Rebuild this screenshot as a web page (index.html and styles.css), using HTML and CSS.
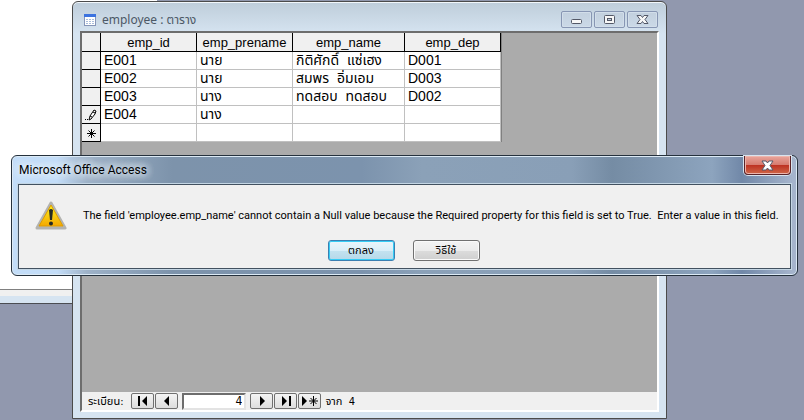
FILE: index.html
```html
<!DOCTYPE html>
<html lang="th">
  <head>
    <meta charset="UTF-8" />
    <meta name="viewport" content="width=device-width, initial-scale=1.0" />
    <title>Microsoft Office Access</title>
    <link rel="stylesheet" href="styles.css">
  </head>
  <body>
    <div class="desktop">
      <div class="back-window"></div>

      <section class="window">
        <header class="window-title">
          <svg class="table-icon" width="12" height="12" viewBox="0 0 12 12" shape-rendering="crispEdges">
            <rect width="12" height="12" fill="#8595b8" />
            <rect width="12" height="3" fill="#3c73df" />
            <rect x="1" y="3" width="10" height="8" fill="#fff" />
            <path d="M2 5h2M5 5h2M8 5h2M2 7h2M5 7h2M8 7h2M2 9h2M5 9h2M8 9h2" stroke="#a9bddc" />
          </svg>
          <h1>employee : ตาราง</h1>
          <div class="window-buttons">
            <button type="button" aria-label="Minimize">
              <svg width="13" height="11" viewBox="0 0 13 11">
                <rect x="1.5" y="5.5" width="10" height="4" rx="1" fill="#f7f7f7" stroke="#535867" />
              </svg>
            </button>
            <button type="button" aria-label="Maximize">
              <svg width="13" height="11" viewBox="0 0 13 11">
                <rect x="1.5" y="1.5" width="10" height="8" rx="1" fill="#f7f7f7" stroke="#535867" />
                <rect x="4.500" y="4.500" width="4" height="2" fill="#c3d0df" stroke="#535867" />
              </svg>
            </button>
            <button type="button" aria-label="Close">
              <svg width="13" height="11" viewBox="0 0 13 11">
                <path d="M1 1.500h4l1.500 2 1.500-2h4L9 5.500l3 4H8l-1.500-2-1.500 2H1l3-4z" fill="#f7f7f7" stroke="#535867" />
              </svg>
            </button>
          </div>
        </header>

        <div class="client">
          <div class="sheet">
            <table>
              <thead>
                <tr>
                  <th class="selector"></th>
                  <th class="id">emp_id</th>
                  <th class="prename">emp_prename</th>
                  <th class="name">emp_name</th>
                  <th class="dep">emp_dep</th>
                </tr>
              </thead>
              <tbody>
                <tr>
                  <td class="selector"></td>
                  <td>E001</td>
                  <td>นาย</td>
                  <td>กิติศักดิ์&nbsp; แซ่เฮง</td>
                  <td>D001</td>
                </tr>
                <tr>
                  <td class="selector"></td>
                  <td>E002</td>
                  <td>นาย</td>
                  <td>สมพร&nbsp; อิ่มเอม</td>
                  <td>D003</td>
                </tr>
                <tr>
                  <td class="selector"></td>
                  <td>E003</td>
                  <td>นาง</td>
                  <td>ทดสอบ&nbsp; ทดสอบ</td>
                  <td>D002</td>
                </tr>
                <tr>
                  <td class="selector">
                    <svg width="12" height="12" viewBox="0 0 12 12">
                      <path d="M4 11l1-4 4-6 2 1-1 3-4 5zM5 7l2 1M8 3l2 1" fill="#fff" stroke="#000" />
                      <path d="M0 10h1v1H0zM2 10h1v1H2z" />
                    </svg>
                  </td>
                  <td>E004</td>
                  <td>นาง</td>
                  <td></td>
                  <td></td>
                </tr>
                <tr>
                  <td class="selector">
                    <svg width="12" height="12" viewBox="0 0 12 12">
                      <path d="M6.500 2v9M2 6.500h9M3.500 3.500l6 6M9.500 3.500l-6 6" fill="none" stroke="#000" />
                    </svg>
                  </td>
                  <td></td>
                  <td></td>
                  <td></td>
                  <td></td>
                </tr>
              </tbody>
            </table>
          </div>

          <footer class="record-nav">
            <label for="record">ระเบียน:</label>
            <div class="nav-group">
              <button type="button" aria-label="First record">
                <svg width="12" height="10" viewBox="0 0 12 10"><path d="M1 0h2v10H1zM10 0v10L5 5z" /></svg>
              </button>
              <button type="button" aria-label="Previous record">
                <svg width="12" height="10" viewBox="0 0 12 10"><path d="M8 0v10L3 5z" /></svg>
              </button>
            </div>
            <input id="record" type="text" value="4">
            <div class="nav-group">
              <button type="button" aria-label="Next record">
                <svg width="12" height="10" viewBox="0 0 12 10"><path d="M4 0v10l5-5z" /></svg>
              </button>
              <button type="button" aria-label="Last record">
                <svg width="12" height="10" viewBox="0 0 12 10"><path d="M2 0v10l5-5zM9 0h2v10H9z" /></svg>
              </button>
              <button type="button" aria-label="New record">
                <svg width="18" height="10" viewBox="0 0 18 10">
                  <path d="M1 0v10l5-5z" />
                  <path d="M12.500 0v10M8 5h9M9.500 2l6 6M15.500 2l-6 6" fill="none" stroke="#000" />
                </svg>
              </button>
            </div>
            <span>จาก&nbsp; 4</span>
          </footer>
        </div>
      </section>

      <section class="dialog" role="alertdialog" aria-labelledby="dialogTitle" aria-describedby="dialogText">
        <header class="dialog-title">
          <h2 id="dialogTitle">Microsoft Office Access</h2>
          <button type="button" class="close" aria-label="Close">
            <svg width="13" height="11" viewBox="0 0 13 11">
              <path d="M1 1h4l1.500 2L8 1h4L9 5.500l3 4.500H8L6.500 8 5 10H1l3-4.500z" fill="#fff" stroke="#555969" />
            </svg>
          </button>
        </header>
        <div class="dialog-body">
          <div class="message">
            <svg width="32" height="30" viewBox="0 0 32 30">
              <defs>
                <linearGradient id="warn" x1="0" y1="0" x2="0" y2="1">
                  <stop offset="0" stop-color="#fff21a" />
                  <stop offset="0.500" stop-color="#f8cd13" />
                  <stop offset="1" stop-color="#f5a800" />
                </linearGradient>
              </defs>
              <path d="M16 2L30 27H2z" fill="#c3c3c0" stroke="#b3b3b0" stroke-width="3" stroke-linejoin="round" />
              <path d="M16 4L28 25H4z" fill="url(#warn)" stroke="#df9d00" stroke-linejoin="round" />
              <path d="M14 9q2-2 4 0l-1 10h-2z" fill="#252a24" />
              <circle cx="16" cy="22.500" r="2" fill="#252a24" />
            </svg>
            <p id="dialogText">The field 'employee.emp_name' cannot contain a Null value because the Required property for this field is set to True.&nbsp; Enter a value in this field.</p>
          </div>
          <div class="actions">
            <button type="button" class="default">ตกลง</button>
            <button type="button">วิธีใช้</button>
          </div>
        </div>
      </section>
    </div>
  </body>
</html>
```
FILE: styles.css
```css
* {
  margin: 0;
  padding: 0;
  box-sizing: border-box;
}

body {
  font-family: "DejaVu Sans Condensed", "Noto Sans Thai", sans-serif;
  font-size: 11px;
  color: #000;
}

svg {
  display: block;
  flex-shrink: 0;
}

.desktop {
  position: relative;
  height: 100vh;
  overflow: hidden;
  background: #9198ae;
}

/* window that sits behind everything at the left edge */
.back-window {
  position: absolute;
  top: 0;
  left: 0;
  width: 157px;
  height: 304px;
  background: #fff;
  border-bottom: 1px solid #4b4d52;
  box-shadow: inset 0 -7px #d6e4f1, inset 0 -13px #f0f0f0, inset 0 -14px #808080;
}

.window {
  position: absolute;
  top: 1px;
  bottom: 1px;
  left: 72px;
  right: 137px;
  display: flex;
  flex-direction: column;
  padding: 0 7px 6px;
  background: linear-gradient(#becdda, #d6e4f1 32px);
  border: 1px solid #4b4b4b;
  border-radius: 6px 6px 0 0;
  box-shadow: inset 0 1px #f2f7fb;
}

.window-title {
  display: flex;
  align-items: center;
  height: 29px;
  padding: 6px 1px 0 4px;
}

.window-title h1 {
  flex: 1;
  margin-left: 6px;
  font-family: "Noto Sans", "Noto Sans Thai", sans-serif;
  font-size: 12px;
  font-weight: normal;
  line-height: 16px;
  color: #4c5866;
}

.window-buttons {
  display: flex;
  gap: 2px;
}

.window-buttons button {
  display: flex;
  align-items: center;
  justify-content: center;
  width: 31px;
  height: 17px;
  background: linear-gradient(#c2d0de, #cbd9e7);
  border: 1px solid #8796b3;
  border-radius: 2px;
  box-shadow: inset 0 0 0 1px #d2deea;
}

.client {
  flex: 1;
  display: flex;
  flex-direction: column;
  border: 2px solid;
  border-color: #6d6d6d #fff #fff #6d6d6d;
  background: #ababab;
}

.sheet {
  flex: 1;
}

table {
  border-collapse: separate;
  border-spacing: 0;
  table-layout: fixed;
  width: 420px;
  border-right: 1px solid #808080;
  font-family: "Liberation Sans", "Noto Sans Thai", sans-serif;
  font-size: 14px;
}

th,
td {
  height: 18px;
  font-weight: normal;
  line-height: 17px;
  white-space: nowrap;
}

th {
  height: 19px;
  font-size: 13px;
  background: #f0f0f0;
  border-right: 1px solid #000;
  border-bottom: 1px solid #000;
}

td {
  padding-left: 3px;
  background: #fff;
  border-right: 1px solid #c0c0c0;
  border-bottom: 1px solid #c0c0c0;
}

.selector {
  width: 19px;
}

td.selector {
  padding-left: 3px;
  background: #f0f0f0;
  border-right: 1px solid #000;
  border-bottom: 1px solid #000;
}

.id,
.prename,
.dep {
  width: 96px;
}

.name {
  width: 112px;
}

.record-nav {
  display: flex;
  align-items: center;
  gap: 4px;
  height: 18px;
  padding-left: 6px;
  background: #f0f0f0;
}

.record-nav label {
  margin-right: 4px;
}

.nav-group {
  display: flex;
  gap: 1px;
}

.nav-group button {
  display: flex;
  align-items: center;
  justify-content: center;
  width: 23px;
  height: 16px;
  background: linear-gradient(#f4f4f4, #ddd);
  border: 1px solid #707070;
  border-radius: 2px;
}

.record-nav input {
  width: 64px;
  height: 17px;
  padding-right: 2px;
  border: 2px solid;
  border-color: #6d6d6d #e3e3e3 #e3e3e3 #6d6d6d;
  background: #fff;
  font-family: "DejaVu Sans Condensed", sans-serif;
  font-size: 12px;
  text-align: right;
}

/* message box, glass frame */
.dialog {
  position: absolute;
  top: 155px;
  left: 11px;
  right: 6px;
  padding: 0 6px 6px;
  border: 1px solid #25313d;
  border-radius: 6px;
  box-shadow: inset 0 0 0 1px #dceaf5;
  background: linear-gradient(90deg, #c3ddf8 0, #c3ddf8 45px, #9eb2c8 75px, #7d93ab 160px, #7c93ad 350px, #8ba1b8 410px, #899fb7 560px, #758ca4 600px, #8da4be 700px, #7188a8 730px, #a5b4cc 780px);
}

.dialog-title {
  display: flex;
  justify-content: space-between;
  height: 28px;
}

.dialog-title h2 {
  margin-top: 5px;
  padding: 0 8px 0 1px;
  font-family: Roboto, sans-serif;
  font-size: 12px;
  font-weight: normal;
  line-height: 18px;
  text-shadow: 0 0 8px #e9f2fa, 0 0 8px #e9f2fa, 0 0 8px #e9f2fa;
}

.close {
  display: flex;
  align-items: center;
  justify-content: center;
  width: 47px;
  height: 19px;
  border: 1px solid #5a2328;
  border-top: 0;
  border-radius: 0 0 4px 4px;
  box-shadow: inset 0 0 0 1px #edb5ad, 0 0 0 1px #d8e3ee;
  background: linear-gradient(#e9a59c, #d67a6e 9px, #bd3021 9px, #cf6748);
}

.dialog-body {
  padding: 16px 8px 7px 16px;
  background: #f0f0f0;
  border: 1px solid #425160;
  box-shadow: 0 0 0 1px #c4d6e4;
}

.message {
  display: flex;
  align-items: center;
  gap: 16px;
}

.message p {
  font-family: Roboto, sans-serif;
  line-height: 14px;
  white-space: nowrap;
}

.actions {
  display: flex;
  justify-content: center;
  gap: 18px;
  margin: 9px 10px 0 0;
}

.actions button {
  width: 67px;
  height: 21px;
  font-family: "DejaVu Sans Condensed", "Noto Sans Thai", sans-serif;
  font-size: 11px;
  line-height: 17px;
  background: linear-gradient(#f3f3f3, #ebebeb 10px, #dcdcdc 10px, #cfcfcf);
  border: 1px solid #707070;
  border-radius: 3px;
  box-shadow: inset 0 0 0 1px #fafafa;
}

.actions .default {
  background: linear-gradient(#eaf5fb, #d9eef8 10px, #c3e2f0 10px, #b5d8e9);
  border-color: #3c7fb1;
  box-shadow: inset 0 0 0 1px #35ccf5;
}
```
